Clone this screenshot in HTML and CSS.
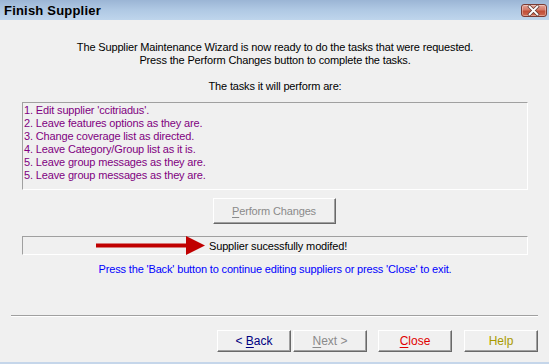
FILE: index.html
```html
<!DOCTYPE html>
<html lang="en">
<head>
    <meta charset="UTF-8">
    <title>Finish Supplier</title>
    <link rel="stylesheet" href="styles.css">
</head>
<body>

    <div class="window">
        <div class="titlebar">
            <span class="title">Finish Supplier</span>
            <span class="close-btn">
                <svg width="26" height="13" viewBox="0 0 26 13">
                    <path d="M9 2.5 L17 10.5 M17 2.5 L9 10.5" stroke="#5a3a36" stroke-width="3.4" stroke-linecap="square"/>
                    <path d="M9 2.5 L17 10.5 M17 2.5 L9 10.5" stroke="#fff" stroke-width="2" stroke-linecap="square"/>
                </svg>
            </span>
        </div>

        <div class="content">
            <p class="intro">
                The Supplier Maintenance Wizard is now ready to do the tasks that were requested.<br>
                Press the Perform Changes button to complete the tasks.
            </p>
            <p class="lead">The tasks it will perform are:</p>

            <div class="tasks">
                <div>1. Edit supplier 'ccitriadus'.</div>
                <div>2. Leave features options as they are.</div>
                <div>3. Change coverage list as directed.</div>
                <div>4. Leave Category/Group list as it is.</div>
                <div>5. Leave group messages as they are.</div>
                <div>5. Leave group messages as they are.</div>
            </div>

            <div class="perform-row">
                <button class="btn btn-perform" disabled><u>P</u>erform Changes</button>
            </div>

            <div class="status">
                <!-- flecha roja -->
                <svg class="arrow" width="110" height="17" viewBox="0 0 110 17">
                    <rect x="0" y="6.5" width="94" height="4" fill="#c00000"/>
                    <polygon points="90,-1 109,8.5 90,18" fill="#c00000"/>
                </svg>
                <span>Supplier sucessfully modifed!</span>
            </div>

            <p class="hint">Press the 'Back' button to continue editing suppliers or press 'Close' to exit.</p>
        </div>

        <div class="footer">
            <div class="separator"></div>
            <div class="buttons">
                <button class="btn btn-back">&lt; <u>B</u>ack</button>
                <button class="btn btn-next" disabled><u>N</u>ext &gt;</button>
                <button class="btn btn-close"><u>C</u>lose</button>
                <button class="btn btn-help">Help</button>
            </div>
        </div>

        <div class="bottom-edge"></div>
    </div>

</body>
</html>
```

FILE: styles.css
```css
  body {
      margin: 0;
      background: #f0f0f0;
      font-family: 'Liberation Sans', Arial, sans-serif;
      font-size: 11px;
      letter-spacing: -0.15px;
      color: #000;
  }

  .window {
      width: 549px;
      height: 364px;
      display: flex;
      flex-direction: column;
      background: #f0f0f0;
  }

  /* Barra de titulo */
  .titlebar {
      height: 20px;
      display: flex;
      align-items: center;
      justify-content: space-between;
      padding: 0 2px 0 4px;
      background: linear-gradient(to bottom, #9bb5d5 0%, #b0c9e4 50%, #bfd5ec 100%);
  }

  .title {
      font-weight: bold;
      font-size: 13px;
      letter-spacing: 0.2px;
      color: #000;
  }

  .close-btn {
      width: 26px;
      height: 13px;
      margin-top: 1px;
      border: 1px solid #7a3b33;
      border-radius: 3px;
      background: linear-gradient(to bottom, #e4a396 0%, #d37866 45%, #c04d36 55%, #cf6a52 100%);
      box-shadow: inset 0 0 0 1px rgba(255, 255, 255, 0.35);
      display: flex;
      box-sizing: border-box;
      overflow: hidden;
  }

  .close-btn svg {
      margin: -1px 0 0 -1px;
  }

  /* Contenido */
  .content {
      padding: 21px 21px 0 22px;
  }

  .intro,
  .lead,
  .hint {
      margin: 0;
      text-align: center;
      line-height: 13px;
  }

  .lead {
      margin-top: 13px;
  }

  .tasks {
      margin-top: 9px;
      padding: 1px 0 0 1px;
      box-sizing: border-box;
      height: 88px;
      border: 1px solid;
      border-color: #a0a0a0 #fff #fff #a0a0a0;
      color: #800080;
      line-height: 13px;
  }

  .perform-row {
      display: flex;
      justify-content: center;
      margin-top: 8px;
      padding-right: 2px;
  }

  .btn {
      font-family: 'Liberation Sans', Arial, sans-serif;
      font-size: 12px;
      height: 22px;
      width: 74px;
      padding: 0;
      background: #f0f0f0;
      border: 1px solid;
      border-color: #fff #696969 #696969 #fff;
      box-shadow: inset -1px -1px 0 #a0a0a0;
      cursor: pointer;
  }

  .btn u {
      text-decoration-thickness: 1px;
      text-underline-offset: 2px;
  }

  .btn-perform {
      width: 123px;
      height: 26px;
      font-size: 11px;
      letter-spacing: -0.15px;
      color: #8a8a8a;
  }

  .status {
      margin-top: 12px;
      height: 19px;
      box-sizing: border-box;
      border: 1px solid;
      border-color: #a0a0a0 #fff #fff #a0a0a0;
      display: flex;
      align-items: center;
      padding-left: 73px;
  }

  .arrow {
      display: block;
      margin-right: 3px;
      overflow: visible;
  }

  .hint {
      margin-top: 8px;
      color: #0000ff;
  }

  /* Pie con botones */
  .footer {
      margin-top: auto;
      padding: 0 11px 10px 11px;
  }

  .separator {
      height: 1px;
      background: #a0a0a0;
      border-bottom: 1px solid #fff;
  }

  .buttons {
      display: flex;
      justify-content: flex-end;
      margin-top: 13px;
  }

  .btn-back {
      color: #000080;
      margin-right: 2px;
  }

  .btn-next {
      color: #8a8a8a;
      margin-right: 11px;
  }

  .btn-close {
      color: #e00000;
      margin-right: 12px;
  }

  .btn-help {
      color: #a89a00;
  }

  .bottom-edge {
      height: 2px;
      background: #c5d6ea;
  }
```
